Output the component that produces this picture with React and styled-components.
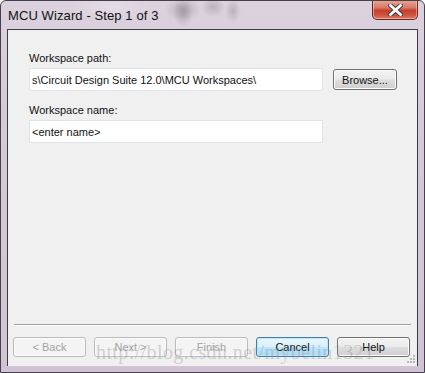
import React from "react";
import styled, { createGlobalStyle } from "styled-components";

const Global = createGlobalStyle`
  html, body { margin: 0; padding: 0; background: #ffffff; }
  * { box-sizing: border-box; }
`;

const Window = styled.div`
  position: relative;
  width: 425px;
  height: 373px;
  display: flex;
  flex-direction: column;
  border: 1px solid #45414a;
  border-radius: 6px 6px 0 0;
  background:
    radial-gradient(ellipse 18px 12px at 182px 8px, rgba(120,110,125,0.35), transparent),
    radial-gradient(ellipse 10px 14px at 182px 12px, rgba(90,85,95,0.3), transparent),
    radial-gradient(ellipse 12px 10px at 212px 6px, rgba(110,100,120,0.3), transparent),
    radial-gradient(ellipse 8px 12px at 232px 10px, rgba(110,100,120,0.3), transparent),
    radial-gradient(ellipse 40px 14px at 110px 6px, rgba(235,230,240,0.5), transparent),
    linear-gradient(180deg, #dcd2de 0%, #d6c9d9 30%, #d2c2d5 100%);
  overflow: hidden;
  font-family: "Liberation Sans", Arial, sans-serif;
`;

const TitleBar = styled.div`
  height: 28px;
  display: flex;
  align-items: center;
  padding-left: 7px;
  flex-shrink: 0;
`;

const Title = styled.span`
  font-size: 13px;
  color: #111;
  letter-spacing: 0.1px;
`;

const CloseButton = styled.div`
  margin-left: auto;
  margin-right: 6px;
  align-self: flex-start;
  margin-top: -1px;
  width: 46px;
  height: 20px;
  border: 1px solid #6b2a22;
  border-top: none;
  border-radius: 0 0 5px 5px;
  background: linear-gradient(180deg, #e9a899 0%, #d87a68 40%, #c6402c 55%, #cd5440 80%, #e0806a 100%);
  box-shadow: inset 0 0 0 1px rgba(255,210,200,0.5);
  display: flex;
  align-items: center;
  justify-content: center;
`;

const Client = styled.div`
  flex: 1;
  margin: 0 6px;
  border: 1px solid #3d3a40;
  border-bottom: none;
  background: #f0f0f0;
  display: flex;
  flex-direction: column;
  position: relative;
`;

const Form = styled.div`
  flex: 1;
  padding: 21px 0 0 21px;
  display: flex;
  flex-direction: column;
`;

const Label = styled.div`
  font-size: 11px;
  color: #111;
  line-height: 14px;
  margin-bottom: 3px;
`;

const Row = styled.div`
  display: flex;
  align-items: center;
  gap: 10px;
  margin-bottom: ${(p) => p.$space || 0}px;
`;

const TextBox = styled.div`
  width: 294px;
  height: 23px;
  background: #ffffff;
  border: 1px solid #e2e6ec;
  border-top-color: #dfe3e8;
  padding-left: 2px;
  font-size: 11px;
  color: #111;
  display: flex;
  align-items: center;
  white-space: nowrap;
  overflow: hidden;
`;

const Button = styled.div`
  width: ${(p) => p.$w || 73}px;
  height: ${(p) => p.$h || 20}px;
  border-radius: 3px;
  font-size: 11px;
  display: flex;
  align-items: center;
  justify-content: center;
  color: ${(p) => (p.$disabled ? "#a3a3a3" : "#111")};
  border: 1px solid ${(p) => (p.$disabled ? "#b9bcbf" : p.$default ? "#3c7fb1" : "#707070")};
  background: ${(p) =>
    p.$disabled
      ? "#f4f4f4"
      : p.$default
      ? "linear-gradient(180deg, #eaf6fd 0%, #d9f0fc 48%, #bee6fd 52%, #a7d9f5 100%)"
      : "linear-gradient(180deg, #f2f2f2 0%, #ebebeb 48%, #dddddd 52%, #cfcfcf 100%)"};
  box-shadow: inset 0 0 0 1px ${(p) => (p.$disabled ? "#fbfbfb" : p.$default ? "#c4e5f6" : "#fcfcfc")};
`;

const Separator = styled.div`
  height: 1px;
  margin: 0 6px 0 6px;
  background: #a0a0a0;
  border-bottom: 1px solid #ffffff;
  box-sizing: content-box;
`;

const ButtonBar = styled.div`
  display: flex;
  gap: 8px;
  padding: 11px 0 9px 5px;
`;

const BottomFrame = styled.div`
  height: 6px;
  flex-shrink: 0;
`;

const Watermark = styled.div`
  position: absolute;
  left: 95px;
  bottom: 8px;
  font-family: "Liberation Serif", "Times New Roman", serif;
  font-size: 20px;
  letter-spacing: 0.4px;
  color: rgba(150, 150, 150, 0.4);
  pointer-events: none;
  white-space: nowrap;
`;

const Grip = styled.svg`
  position: absolute;
  right: 1px;
  bottom: 2px;
`;

function CloseGlyph() {
  return (
    <svg width="15" height="12" viewBox="0 0 15 12">
      <path
        d="M2.5 1.5 L12.5 10.5 M12.5 1.5 L2.5 10.5"
        stroke="#3b3b3b"
        strokeWidth="4.6"
        strokeLinecap="square"
      />
      <path
        d="M2.5 1.5 L12.5 10.5 M12.5 1.5 L2.5 10.5"
        stroke="#ffffff"
        strokeWidth="2.8"
        strokeLinecap="square"
      />
    </svg>
  );
}

export default function App() {
  return (
    <>
      <Global />
      <Window>
        <TitleBar>
          <Title>MCU Wizard - Step 1 of 3</Title>
          <CloseButton>
            <CloseGlyph />
          </CloseButton>
        </TitleBar>
        <Client>
          <Form>
            <Label>Workspace path:</Label>
            <Row $space={12}>
              <TextBox>s\Circuit Design Suite 12.0\MCU Workspaces\</TextBox>
              <Button $w={64} $h={21}>Browse...</Button>
            </Row>
            <Label>Workspace name:</Label>
            <Row>
              <TextBox>&lt;enter name&gt;</TextBox>
            </Row>
          </Form>
          <Separator />
          <ButtonBar>
            <Button $disabled>&lt; Back</Button>
            <Button $disabled>Next &gt;</Button>
            <Button $disabled>Finish</Button>
            <Button $default>Cancel</Button>
            <Button>Help</Button>
          </ButtonBar>
          <Grip width="10" height="10" viewBox="0 0 10 10">
            {[
              [7, 1], [4, 4], [7, 4], [1, 7], [4, 7], [7, 7],
            ].map(([x, y]) => (
              <rect key={x + "-" + y} x={x} y={y} width="2" height="2" fill="#b8b8b8" />
            ))}
          </Grip>
        </Client>
        <BottomFrame />
        <Watermark>http://blog.csdn.net/mybelin1321</Watermark>
      </Window>
    </>
  );
}
